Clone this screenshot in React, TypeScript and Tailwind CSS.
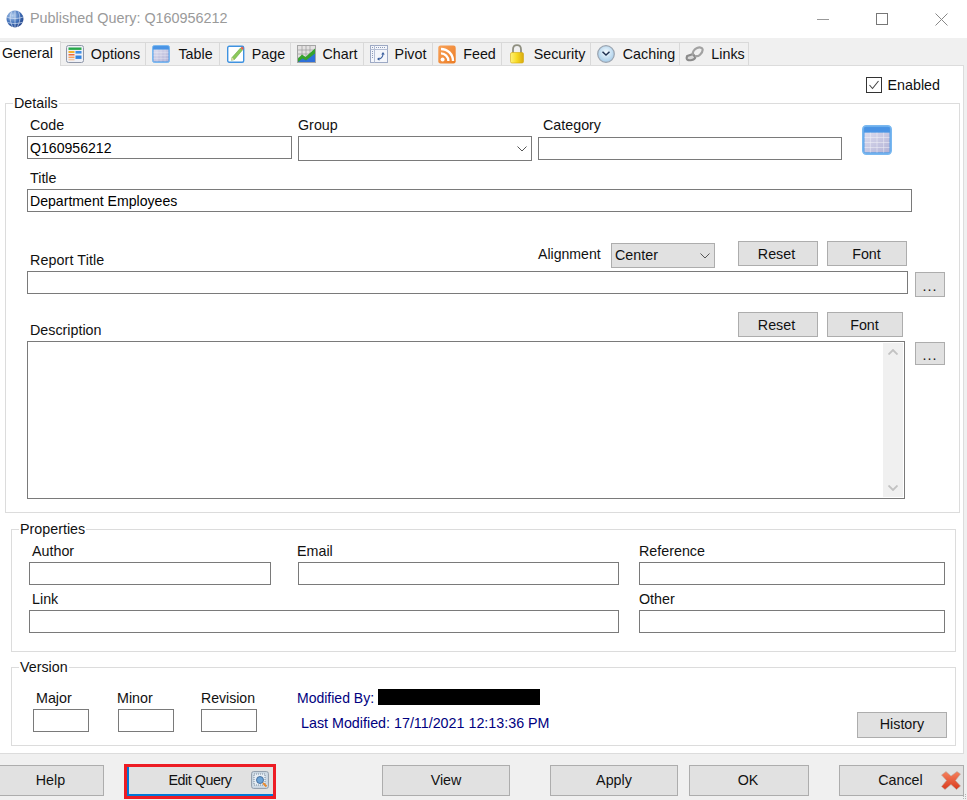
import React from "react";

const Input = ({ className = "", children }: { className?: string; children?: React.ReactNode }) => (
  <div className={`h-[23px] border border-[#7a7a7a] bg-white pl-[2px] text-[14.1px] leading-[23px] text-black ${className}`}>{children}</div>
);

const Btn = ({ className = "", children }: { className?: string; children?: React.ReactNode }) => (
  <div className={`flex items-center justify-center border border-[#adadad] bg-[#e1e1e1] text-[#111] ${className}`}>{children}</div>
);

const Lab = ({ className = "", children }: { className?: string; children: React.ReactNode }) => (
  <div className={`h-[16px] leading-[16px] whitespace-nowrap ${className}`}>{children}</div>
);

const Chevron = ({ color = "#555", up = false, w = 10 }: { color?: string; up?: boolean; w?: number }) => (
  <svg width={w} height={6} viewBox="0 0 10 6" fill="none">
    <path d={up ? "M0.5 5.5 5 1 9.5 5.5" : "M0.5 0.5 5 5 9.5 0.5"} stroke={color} strokeWidth={up || color !== "#555" ? 1.8 : 1} />
  </svg>
);

const Globe = () => (
  <svg width="18" height="18" viewBox="0 0 18 18">
    <defs>
      <radialGradient id="gl" cx="0.35" cy="0.3" r="0.8">
        <stop offset="0" stopColor="#b8d2f0" />
        <stop offset="0.55" stopColor="#3f6fb8" />
        <stop offset="1" stopColor="#1f3c80" />
      </radialGradient>
    </defs>
    <circle cx="9" cy="9" r="8.5" fill="url(#gl)" />
    <path d="M1 7c4 2 11 2 16 0M1 12c4 2 11 2 16 0M6 1C3 6 4 13 7 17M12 1c3 5 2 12-1 16M9 .5v17" stroke="#e8f0fb" strokeWidth=".8" fill="none" opacity=".75" />
  </svg>
);

const TableIcon = ({ s = 18 }: { s?: number }) => (
  <svg width={s} height={s} viewBox="0 0 18 18">
    <defs>
      <linearGradient id={`tb${s}`} x1="0" y1="0" x2="1" y2="1">
        <stop offset="0" stopColor="#dcdcee" />
        <stop offset="1" stopColor="#b3b3d6" />
      </linearGradient>
    </defs>
    <rect x=".5" y=".5" width="17" height="17" rx="2" fill="#4f9ae6" stroke="#7ab8f0" />
    <rect x="1.5" y="4.6" width="15" height="11.8" fill={`url(#tb${s})`} />
    <path d="M1.5 7.5h15M1.5 10.5h15M1.5 13.5h15M5 4.6v12M9 4.6v12M13 4.6v12" stroke="#fff" strokeWidth=".35" opacity=".7" />
    <rect x="1.5" y="1.4" width="15" height="2.6" fill="#4a93e4" />
  </svg>
);

const OptionsIcon = () => (
  <svg width="18" height="18" viewBox="0 0 18 18">
    <rect x=".5" y=".5" width="17" height="17" rx="2" fill="#eef0f6" stroke="#8e96a8" />
    <rect x="2.5" y="2.5" width="13" height="2.4" fill="#27a84a" />
    <rect x="2.5" y="6" width="6" height="2" fill="#f5b22b" />
    <rect x="9.5" y="6" width="6" height="2.6" fill="#3f8ee2" />
    <rect x="2.5" y="9" width="6" height="1.5" fill="#ef6a3c" />
    <rect x="2.5" y="11.6" width="6" height="1.5" fill="#f5a25c" />
    <rect x="9.5" y="10.5" width="6" height="3.4" fill="#2f82e0" />
    <rect x="2.5" y="14" width="6" height="1.4" fill="#f3c7a5" />
  </svg>
);

const PageIcon = () => (
  <svg width="18" height="18" viewBox="0 0 18 18">
    <rect x=".7" y="1.2" width="16" height="16" rx="1.5" fill="#fff" stroke="#3f92e0" strokeWidth="1.4" />
    <path d="M5 12.5 13.5 3l2 2-8 9.5-3 .8z" fill="#8cc85a" stroke="#5f9e3a" strokeWidth=".5" />
    <path d="M13.5 3l1.600-1.600 1.800 1.800L15.500 5z" fill="#e85d4a" />
    <path d="M5 12.500l-.6 2.800 2.800-.8z" fill="#e8d8b0" />
  </svg>
);

const ChartIcon = () => (
  <svg width="19" height="18" viewBox="0 0 19 18">
    <rect x=".5" y=".5" width="18" height="17" fill="#e4e2e2" stroke="#a5a5a5" />
    <path d="M1 5h17M1 9h17M1 13h17M5 1v16M9 1v16M13 1v16" stroke="#9c9c9c" strokeWidth=".7" />
    <path d="M1 17v-3l5-3 3 2 9-7v11z" fill="#2f6fd9" />
    <path d="M1 13.500l4-4 3.500 2.500L18 3.500v5L9 15.500l-3.500-2L1 17z" fill="#35a32c" />
  </svg>
);

const PivotIcon = () => (
  <svg width="18" height="18" viewBox="0 0 18 18" fill="none">
    <rect x=".5" y=".5" width="17" height="17" fill="#f4f6fb" stroke="#9da9c4" />
    <path d="M.5 4.500h17M4.500 .5v17" stroke="#b4bed4" />
    <path d="M2 2.500h1M6 2.500h9M2.500 6v8" stroke="#8d9bb8" strokeDasharray="1 1" />
    <path d="M8 14c3 0 5-2 5-5" stroke="#3b5f9e" strokeWidth="1.100" />
    <path d="M13 7l-1.800 2.400h3.600zM7 14l2.400-1.800v3.600z" fill="#3b5f9e" />
  </svg>
);

const FeedIcon = () => (
  <svg width="18" height="19" viewBox="0 0 18 19">
    <defs>
      <linearGradient id="fd" x1="0" y1="0" x2="1" y2="1">
        <stop offset="0" stopColor="#f8a25a" />
        <stop offset="1" stopColor="#ec7c23" />
      </linearGradient>
    </defs>
    <rect x=".3" y=".5" width="17.400" height="18" rx="2.200" fill="url(#fd)" />
    <circle cx="4.600" cy="14.400" r="2" fill="#fff" />
    <path d="M3 8.400c4 0 7.400 3.200 7.400 7.600M3 4c6.600 0 12 5.200 12 12" stroke="#fff" strokeWidth="2.400" fill="none" />
  </svg>
);

const LockIcon = () => (
  <svg width="16" height="20" viewBox="0 0 16 20">
    <defs>
      <linearGradient id="lk" x1="0" y1="0" x2="1" y2="0">
        <stop offset="0" stopColor="#fff27a" />
        <stop offset="0.5" stopColor="#f6d923" />
        <stop offset="1" stopColor="#d8a90f" />
      </linearGradient>
    </defs>
    <path d="M4 9V5.500C4 3 5.500 1.200 8 1.200s4 1.800 4 4.300V9" fill="none" stroke="#8f8f80" strokeWidth="1.800" />
    <rect x="1.500" y="8.500" width="13" height="10.500" rx="1.500" fill="url(#lk)" stroke="#d3a90e" strokeWidth=".6" />
  </svg>
);

const ClockIcon = () => (
  <svg width="18" height="18" viewBox="0 0 18 18">
    <defs>
      <radialGradient id="ck" cx="0.5" cy="0.4" r="0.6">
        <stop offset="0" stopColor="#f4fbff" />
        <stop offset="1" stopColor="#a4cbe8" />
      </radialGradient>
    </defs>
    <circle cx="9" cy="9" r="8.300" fill="url(#ck)" stroke="#9aa4b0" strokeWidth="1.200" />
    <path d="M5.500 6.800 9 10l3.500-3.200" fill="none" stroke="#1f3150" strokeWidth="1.500" />
  </svg>
);

const LinkIcon = () => (
  <svg width="19" height="16" viewBox="0 0 19 16" fill="none">
    <path d="M2.200 10 8 8l2 2.800c.6 1.400-1 2.800-3 3.200-2 .4-4.800.2-5.200-1.300-.2-1 0-2 .4-2.700z" stroke="#8a8a8a" strokeWidth="2.200" fill="#d8d8d8" />
    <path d="M8 9c-1-3 1.500-6 4-7 2.500-1 5-.5 5.500 1 .5 1.700-.5 3.800-2.500 5.700-1.500 1.400-3.500 1.800-5 1.200" stroke="#a2a2a2" strokeWidth="2.200" />
  </svg>
);

const EditIcon = () => (
  <svg width="18" height="18" viewBox="0 0 18 18" fill="none">
    <rect x=".6" y=".6" width="16.800" height="16.800" rx="2" fill="#cfdbe6" stroke="#8e9aa8" />
    <rect x="3" y="3" width="11" height="11" stroke="#7d8c9c" strokeDasharray="1 1" fill="#e6edf4" />
    <circle cx="9" cy="9" r="3.500" fill="#6ca4d8" stroke="#375f8e" strokeWidth=".8" />
    <path d="M12 12l3.500 3.500" stroke="#e88a2e" strokeWidth="2" />
  </svg>
);

const CancelIcon = () => (
  <svg width="20" height="19" viewBox="0 0 20 19">
    <defs>
      <linearGradient id="cx" x1="0" y1="0" x2="0" y2="1">
        <stop offset="0" stopColor="#f5825e" />
        <stop offset="1" stopColor="#d93a1e" />
      </linearGradient>
    </defs>
    <path d="M.5 4 5 .5 10 5 16 .5 19.500 3 14.500 9.500 19.500 15 15.500 18.500 10 13.500 4 18.500 .5 15.500 5.500 9.500z" fill="url(#cx)" stroke="#b9b0a8" strokeWidth=".6" />
  </svg>
);

const tabs = [
  { name: "Options", w: "w-[85px]", g: "gap-[7px]", icon: <OptionsIcon /> },
  { name: "Table", w: "w-[74px]", g: "gap-[8px]", icon: <TableIcon /> },
  { name: "Page", w: "w-[71px]", g: "gap-[7px] pl-[2px]", icon: <PageIcon /> },
  { name: "Chart", w: "w-[73px]", g: "gap-[7px]", icon: <ChartIcon /> },
  { name: "Pivot", w: "w-[69px]", g: "gap-[7px]", icon: <PivotIcon /> },
  { name: "Feed", w: "w-[69px]", g: "gap-[7px]", icon: <FeedIcon /> },
  { name: "Security", w: "w-[89px]", g: "gap-[9px] pl-[2px]", icon: <LockIcon /> },
  { name: "Caching", w: "w-[89px]", g: "gap-[8px] pl-[2px]", icon: <ClockIcon /> },
  { name: "Links", w: "w-[69px]", g: "gap-[7px] pl-[2px]", icon: <LinkIcon /> },
];

export default function App() {
  return (
    <div className="relative flex h-[800px] w-[967px] flex-col overflow-hidden bg-[#f0f0f0] font-['Liberation_Sans',Arial,sans-serif] text-[14.3px] text-[#111]">
      <div className="flex h-[38px] shrink-0 items-center bg-white">
        <div className="ml-[6px] flex w-[24px]"><Globe /></div>
        <div className="text-[14.4px] text-[#9a9a9a]">Published Query: Q160956212</div>
        <div className="ml-auto flex items-center">
          <svg width="12" height="12" viewBox="0 0 12 12" className="mr-[47px]"><path d="M0 6.500h12" stroke="#999" /></svg>
          <svg width="12" height="12" viewBox="0 0 12 12" className="mr-[47px]"><rect x=".5" y=".5" width="11" height="11" fill="none" stroke="#777" /></svg>
          <svg width="13" height="13" viewBox="0 0 13 13" className="mr-[19px]"><path d="M.5.5l12 12M12.500.5l-12 12" stroke="#888" /></svg>
        </div>
      </div>

      <div className="flex h-[27px] shrink-0 items-end">
        <div className="relative z-10 -mb-[1px] flex h-[25px] w-[61px] items-start justify-start border-r border-t border-[#d9d9d9] bg-white pl-[2px] pt-[3px] leading-[16px]">General</div>
        {tabs.map((t) => (
          <div key={t.name} className={`flex h-[23px] items-center justify-center border-r border-t border-[#d9d9d9] ${t.w} ${t.g}`}>
            <span className="flex">{t.icon}</span>
            <span className="pt-[1px]">{t.name}</span>
          </div>
        ))}
      </div>

      <div className="flex h-[689px] w-[964px] shrink-0 flex-col border border-l-0 border-[#dcdcdc] bg-white">
        <div className="flex h-[29px] shrink-0 items-start justify-end pr-[23px] pt-[11px]">
          <div className="flex h-[16px] w-[16px] items-center justify-center border border-[#333] bg-white">
            <svg width="12" height="10" viewBox="0 0 12 10" fill="none"><path d="M1.500 5 4.500 8.500 10.500 1" stroke="#444" strokeWidth="1.100" /></svg>
          </div>
          <span className="ml-[6px] leading-[16px]">Enabled</span>
        </div>

        <fieldset className="ml-[5px] h-[418px] w-[955px] shrink-0 border border-[#dcdcdc]">
          <legend className="ml-[7px] bg-white px-[1px] leading-[16px]">Details</legend>
          <div className="flex pt-[6px]">
            <div className="ml-[21px] w-[265px]">
              <Lab className="pl-[3px]">Code</Lab>
              <Input className="mt-[3px]">Q160956212</Input>
            </div>
            <div className="ml-[6px] w-[234px]">
              <Lab>Group</Lab>
              <div className="mt-[3px] flex h-[25px] items-center justify-end border border-[#7a7a7a] bg-white pr-[4px]"><Chevron /></div>
            </div>
            <div className="ml-[6px] w-[304px]">
              <Lab className="pl-[5px]">Category</Lab>
              <Input className="mt-[4px]" />
            </div>
            <div className="ml-[20px] mt-[8px] flex"><TableIcon s={30} /></div>
          </div>
          <Lab className="ml-[24px] mt-[9px]">Title</Lab>
          <Input className="ml-[21px] mt-[3px] w-[885px]">Department Employees</Input>

          <div className="mt-[29px] flex h-[27px] items-start">
            <Lab className="ml-[24px] mt-[11px] w-[508px] tracking-[0.1px]">Report Title</Lab>
            <Lab className="mt-[5px] w-[73px] text-[14.1px]">Alignment</Lab>
            <div className="mt-[2px] flex h-[25px] w-[104px] items-center justify-between border border-[#adadad] bg-[#e1e1e1] pl-[3px] pr-[4px]">
              <span className="pt-[1px]">Center</span><Chevron />
            </div>
            <Btn className="ml-[23px] h-[25px] w-[80px] pr-[3px] pt-[2px]">Reset</Btn>
            <Btn className="ml-[9px] h-[25px] w-[80px] pr-[1px] pt-[2px]">Font</Btn>
          </div>
          <div className="mt-[3px] flex">
            <Input className="ml-[21px] w-[881px]" />
            <Btn className="ml-[7px] mt-[1px] h-[25px] w-[30px] pt-[4px] tracking-[1px]">...</Btn>
          </div>

          <div className="mt-[15px] flex h-[25px] items-start">
            <Lab className="ml-[24px] mt-[10px] w-[708px]">Description</Lab>
            <Btn className="h-[25px] w-[80px] pr-[3px] pt-[2px]">Reset</Btn>
            <Btn className="ml-[9px] h-[25px] w-[76px] pr-[1px] pt-[2px]">Font</Btn>
          </div>
          <div className="mt-[4px] flex">
            <div className="ml-[21px] flex h-[158px] w-[878px] justify-end border border-[#7a7a7a] p-[1px]">
              <div className="flex w-[20px] flex-col items-center justify-between bg-[#f0f0f0] py-[6px]">
                <Chevron up color="#c2c2c2" />
                <Chevron color="#c2c2c2" />
              </div>
            </div>
            <Btn className="ml-[10px] mt-[1px] h-[23px] w-[30px] pt-[4px] tracking-[1px]">...</Btn>
          </div>
        </fieldset>

        <fieldset className="ml-[11px] mt-[8px] h-[131px] w-[945px] shrink-0 border border-[#dcdcdc]">
          <legend className="ml-[7px] bg-white px-[1px] leading-[16px]">Properties</legend>
          <div className="flex pt-[6px]">
            <div className="ml-[17px] w-[242px]">
              <Lab className="pl-[3px]">Author</Lab>
              <Input className="mt-[3px]" />
            </div>
            <div className="ml-[27px] w-[321px]">
              <Lab className="-ml-[1px]">Email</Lab>
              <Input className="mt-[3px]" />
            </div>
            <div className="ml-[20px] w-[306px]">
              <Lab>Reference</Lab>
              <Input className="mt-[3px]" />
            </div>
          </div>
          <div className="mt-[6px] flex">
            <div className="ml-[17px] w-[590px]">
              <Lab className="pl-[3px]">Link</Lab>
              <Input className="mt-[3px]" />
            </div>
            <div className="ml-[20px] w-[306px]">
              <Lab>Other</Lab>
              <Input className="mt-[3px]" />
            </div>
          </div>
        </fieldset>

        <fieldset className="ml-[11px] mt-[7px] h-[87px] w-[945px] shrink-0 border border-[#dcdcdc]">
          <legend className="ml-[7px] bg-white px-[1px] leading-[16px]">Version</legend>
          <div className="flex">
            <div className="ml-[21px] w-[56px] pt-[15px]">
              <Lab className="pl-[3px]">Major</Lab>
              <Input className="mt-[3px]" />
            </div>
            <div className="ml-[29px] w-[56px] pt-[15px]">
              <Lab className="-ml-[1px]">Minor</Lab>
              <Input className="mt-[3px]" />
            </div>
            <div className="ml-[27px] w-[56px] pt-[15px]">
              <Lab className="text-[14.1px]">Revision</Lab>
              <Input className="mt-[3px]" />
            </div>
            <div className="ml-[40px] pt-[14px] text-[#000080]">
              <div className="flex h-[16px] items-center">
                <span className="mt-[2px] w-[81px] text-[14px] leading-[16px]">Modified By:</span>
                <div className="h-[16px] w-[162px] bg-black" />
              </div>
              <div className="ml-[4px] mt-[10px] leading-[16px] whitespace-nowrap">Last Modified: 17/11/2021 12:13:36 PM</div>
            </div>
            <Btn className="ml-auto mr-[8px] mt-[37px] h-[26px] w-[90px]">History</Btn>
          </div>
        </fieldset>
      </div>

      <div className="flex flex-1 items-start pt-[11px]">
        <Btn className="h-[31px] w-[104px] border-l-0 pr-[2px]">Help</Btn>
        <div className="ml-[20px] -mt-[1px] h-[35px] w-[152px] border-[3px] border-[#ed1c24]">
          <div className="relative flex h-full items-center justify-center border-b-2 border-l-2 border-[#0078d7] bg-[#e1e1e1] pr-[2px] tracking-[-0.45px] text-[#111]">
            Edit Query
            <span className="absolute right-[4px] top-[4px] flex"><EditIcon /></span>
          </div>
        </div>
        <Btn className="ml-[106px] h-[31px] w-[128px]">View</Btn>
        <Btn className="ml-[40px] h-[31px] w-[128px]">Apply</Btn>
        <Btn className="ml-[11px] h-[31px] w-[120px] pr-[2px]">OK</Btn>
        <Btn className="relative ml-[30px] h-[31px] w-[125px] pr-[2px]">
          Cancel
          <span className="absolute right-[2px] top-[5px] flex"><CancelIcon /></span>
        </Btn>
      </div>
      <svg width="4" height="6" viewBox="0 0 4 6" className="absolute bottom-0 right-0">
        <path d="M2 0h1v1H2zM0 2h1v1H0zM2 2h1v1H2zM0 4h1v1H0zM2 4h1v1H2z" fill="#b5b5b5" />
      </svg>
    </div>
  );
}
